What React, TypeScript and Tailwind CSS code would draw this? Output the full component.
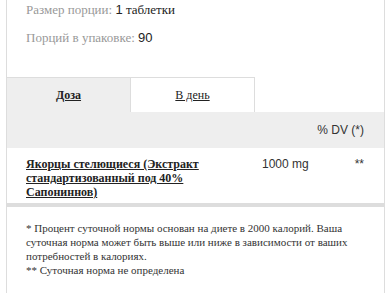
const serif = "[font-family:'Liberation_Serif','Times_New_Roman',serif]";
const sans = "[font-family:'Liberation_Sans',Arial,sans-serif]";

function InfoLine({ label, children }: { label: string; children: React.ReactNode }) {
  return (
    <p className={`${serif} text-[13px] leading-[20px] text-[#999]`}>
      {label} <span className="text-[#222]">{children}</span>
    </p>
  );
}

export default function App() {
  return (
    <div className="w-[392px] h-[293px] overflow-hidden bg-white">
      <div className="ml-[6px] w-[379px] border-x border-b border-[#ddd]">
        <div className="pl-[19px] pt-0 pb-[29px] flex flex-col gap-[8px]">
          <InfoLine label="Размер порции:">
            <span className={sans}>1</span> таблетки
          </InfoLine>
          <InfoLine label="Порций в упаковке:">
            <span className={sans}>90</span>
          </InfoLine>
        </div>

        <div className={`${serif} flex text-[12px] text-[#222] h-[35px]`}>
          <div className="w-[123px] bg-[#eee] border-t border-[#ddd] flex items-center justify-center">
            <span className="font-bold underline">Доза</span>
          </div>
          <div className="w-[125px] bg-white border-x border-t border-[#ddd] flex items-center justify-center">
            <span className="underline">В день</span>
          </div>
        </div>

        <div className={`${sans} h-[36px] bg-[#eee] flex items-center justify-end pr-[20px] text-[12px] text-[#333]`}>
          % DV (*)
        </div>

        <div className="flex px-[19px] pt-[9px] h-[55px]">
          <div className={`${serif} w-[236px] pr-[30px] text-[12px] leading-[14px] font-bold underline text-[#222]`}>
            Якорцы стелющиеся (Экстракт стандартизованный под 40% Сапониннов)
          </div>
          <div className={`${sans} flex-1 text-[12px] leading-[14px] text-[#333]`}>1000 mg</div>
          <div className={`${sans} text-[12px] leading-[14px] text-[#333] pr-px`}>**</div>
        </div>

        <div className="h-[4px] bg-[#ddd]" />

        <div className={`${serif} px-[19px] pt-[14px] pb-[22px] text-[11px] leading-[14px] text-[#333]`}>
          <p>
            * Процент суточной нормы основан на диете в 2000 калорий. Ваша суточная норма может быть
            выше или ниже в зависимости от ваших потребностей в калориях.
          </p>
          <p>** Суточная норма не определена</p>
        </div>
      </div>
    </div>
  );
}
